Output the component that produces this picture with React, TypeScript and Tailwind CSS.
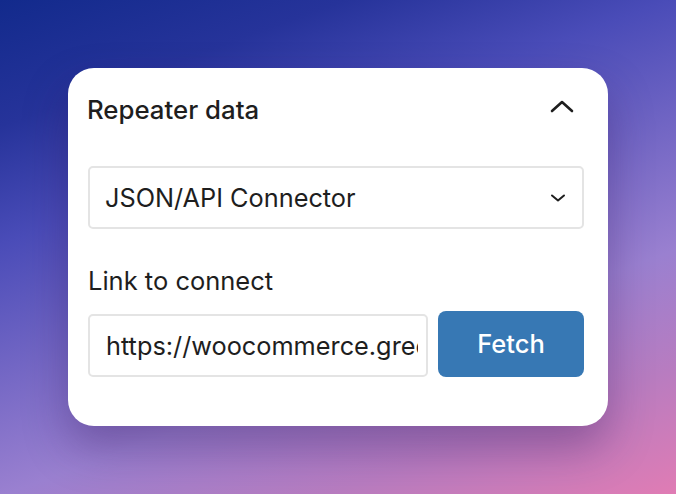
import { ChangeEvent, useState } from "react";

const font = { fontFamily: "Inter, 'Noto Sans', sans-serif" };

function ChevronUp() {
  return (
    <svg width="24" height="14" viewBox="0 0 24 14" fill="none">
      <path d="M2 12L12 3l10 9" stroke="#1e1e1e" strokeWidth="2.6" strokeLinecap="round" strokeLinejoin="round" />
    </svg>
  );
}

function ChevronDown() {
  return (
    <svg width="16" height="10" viewBox="0 0 16 10" fill="none">
      <path d="M2 2.5l6 5 6-5" stroke="#1e1e1e" strokeWidth="2" strokeLinecap="round" strokeLinejoin="round" />
    </svg>
  );
}

export default function App() {
  const [link, setLink] = useState("https://woocommerce.greenshiftwp.com/wp-json/wc/v3/products");

  return (
    <div
      className="w-[676px] h-[494px] overflow-hidden flex items-start justify-center pt-[68px] bg-[linear-gradient(160deg,#122a8c_0%,#26339a_17%,#4a4cb8_33%,#9a80d0_67%,#b87cc0_83%,#e07cb4_100%)]"
      style={font}
    >
      <div className="w-[540px] h-[358px] bg-white rounded-[26px] shadow-[0_22px_44px_rgba(50,20,90,0.35)] pl-5 pr-6 pt-7 flex flex-col">
        {/* header */}
        <div className="flex items-center justify-between h-7">
          <p className="text-[25.8px] leading-7 font-medium text-[#1e1e1e] -ml-px">Repeater data</p>
          <span className="mr-[10px] -mt-2">
            <ChevronUp />
          </span>
        </div>

        {/* source select */}
        <div className="mt-[42px] h-[63px] border-2 border-[#e4e4e4] rounded-[5px] flex items-center justify-between pl-[15px] pr-[16px]">
          <span className="text-[25.3px] text-[#1e1e1e]">JSON/API Connector</span>
          <ChevronDown />
        </div>

        <p className="mt-[38px] text-[25.5px] leading-7 text-[#1e1e1e]">Link to connect</p>

        <div className="mt-4 flex items-end gap-[10px]">
          <input
            value={link}
            onChange={(e: ChangeEvent<HTMLInputElement>) => setLink(e.target.value)}
            className="w-[340px] h-[63px] border-2 border-[#e4e4e4] rounded-[5px] pl-4 pr-2 text-[25.3px] text-[#1e1e1e] outline-none"
          />
          <button className="flex-1 h-[66px] rounded-[8px] bg-[#3778b4] text-white text-[25.5px] font-medium">
            Fetch
          </button>
        </div>
      </div>
    </div>
  );
}
